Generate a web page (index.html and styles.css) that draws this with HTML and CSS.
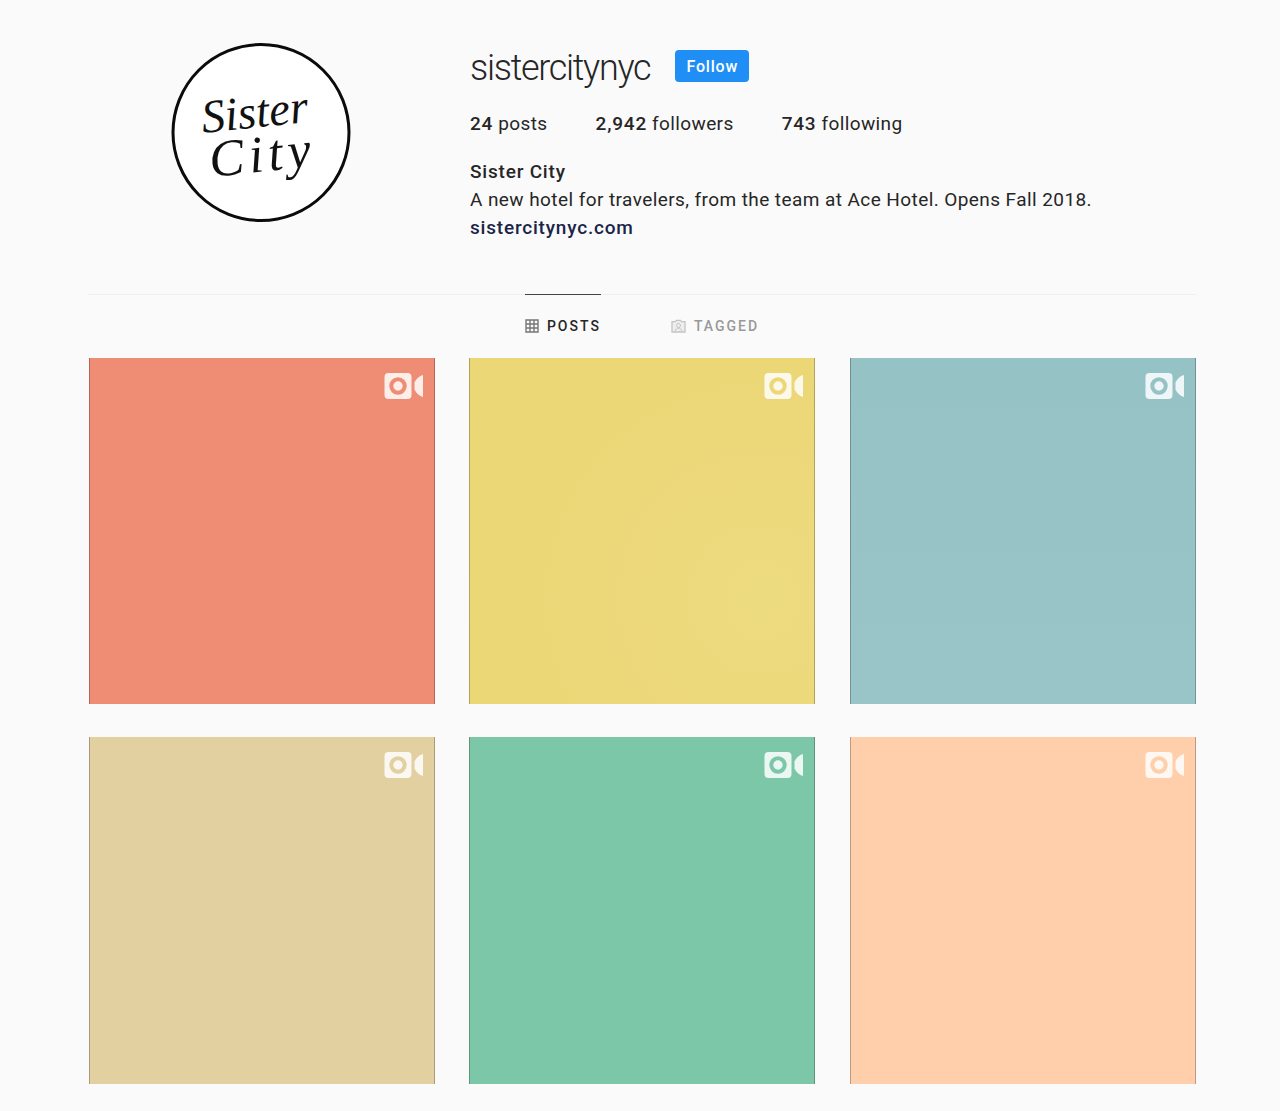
FILE: index.html
```html
<!DOCTYPE html>
<html lang="en">
<head>
    <meta charset="UTF-8">
    <meta name="viewport" content="width=device-width, initial-scale=1.0">
    <title>sistercitynyc</title>
    <link rel="stylesheet" href="styles.css">
</head>
<body>
    <svg class="sprite" width="0" height="0" aria-hidden="true">
        <symbol id="videoIcon" viewBox="0 0 40 28">
            <path fill-rule="evenodd" d="M4.500 1h19a4 4 0 0 1 4 4v18a4 4 0 0 1-4 4h-19a4 4 0 0 1-4-4V5a4 4 0 0 1 4-4zM14 5.300a8.700 8.700 0 1 0 0 17.400 8.700 8.700 0 0 0 0-17.400zM14 9.300a4.700 4.700 0 1 1 0 9.400 4.700 4.700 0 0 1 0-9.400z"/>
            <path d="M39 3v22c-3.600-1-7-4-8.500-7.500v-7C32 7 35.400 4 39 3z"/>
        </symbol>
    </svg>

    <main class="page">
        <!-- Profile header -->
        <header class="profile">
            <div class="avatar-col">
                <svg class="avatar" viewBox="0 0 180 180" role="img" aria-label="Sister City logo">
                    <circle cx="90" cy="89.500" r="88" fill="#fff" stroke="#0b0b0b" stroke-width="3"/>
                    <text class="logo-text" x="32" y="90" transform="rotate(-6 32 90)">Sister</text>
                    <text class="logo-text logo-city" x="40" y="134" transform="rotate(-6 40 134)">City</text>
                </svg>
            </div>
            <section class="info">
                <div class="title-row">
                    <h1>sistercitynyc</h1>
                    <button class="follow">Follow</button>
                </div>
                <ul class="stats">
                    <li><b>24</b> posts</li>
                    <li><b>2,942</b> followers</li>
                    <li><b>743</b> following</li>
                </ul>
                <div class="bio">
                    <h2>Sister City</h2>
                    <p>A new hotel for travelers, from the team at Ace Hotel. Opens Fall 2018.</p>
                    <a href="#">sistercitynyc.com</a>
                </div>
            </section>
        </header>

        <!-- Tabs -->
        <nav class="tabs">
            <a href="#" class="tab active">
                <svg class="tab-icon" viewBox="0 0 14 14">
                    <path fill="none" stroke="#777" stroke-width="1.400" d="M1 1h12v12H1zM5 1v12M9 1v12M1 5h12M1 9h12"/>
                </svg>
                POSTS
            </a>
            <a href="#" class="tab">
                <svg class="tab-icon tagged-icon" viewBox="0 0 15 14">
                    <path fill="#eee" stroke="#c4c4c4" stroke-width="1.300" d="M1 2.700h3.600l.8-1.400h4.200l.8 1.400H14v10.300H1z"/>
                    <circle cx="7.500" cy="6.500" r="2" fill="none" stroke="#c4c4c4"/>
                    <path fill="none" stroke="#c4c4c4" d="M4 12.500c.4-2.200 1.900-3.300 3.500-3.300s3.100 1.100 3.500 3.300"/>
                </svg>
                TAGGED
            </a>
        </nav>

        <!-- Posts -->
        <section class="grid">
            <article class="post coral"><svg class="video"><use href="#videoIcon"/></svg></article>
            <article class="post yellow"><svg class="video"><use href="#videoIcon"/></svg></article>
            <article class="post blue"><svg class="video"><use href="#videoIcon"/></svg></article>
            <article class="post sand"><svg class="video"><use href="#videoIcon"/></svg></article>
            <article class="post green"><svg class="video"><use href="#videoIcon"/></svg></article>
            <article class="post peach"><svg class="video"><use href="#videoIcon"/></svg></article>
        </section>
    </main>
</body>
</html>
```

FILE: styles.css
```css
* {
    box-sizing: border-box;
}
body {
    margin: 0;
    padding: 0;
    background: #fafafa;
    color: #262626;
    font-family: 'Roboto', 'Liberation Sans', sans-serif;
}
.sprite {
    display: block;
}
.page {
    width: 1108px;
    margin-left: 88px;
}
.profile {
    display: flex;
    height: 295px;
    padding-top: 43px;
    border-bottom: 1px solid #efefef;
}
.avatar-col {
    width: 346px;
    margin-right: 36px;
    display: flex;
    justify-content: center;
    flex: none;
}
.avatar {
    display: block;
    width: 180px;
    height: 180px;
}
.logo-text {
    font-family: 'Liberation Serif', serif;
    font-style: italic;
    font-size: 47px;
    fill: #111;
}
.logo-city {
    font-size: 52px;
    letter-spacing: 5px;
}
.title-row {
    display: flex;
    align-items: center;
    height: 46px;
    margin-top: 2px;
}
.title-row h1 {
    margin: 0 25px 0 0;
    font-size: 36px;
    font-weight: 300;
    letter-spacing: -1.300px;
    color: #262626;
}
.follow {
    width: 74px;
    height: 32px;
    padding: 0;
    margin-top: -4px;
    background: #1f8ff5;
    color: #fff;
    border: none;
    border-radius: 4px;
    font-family: inherit;
    font-size: 16px;
    font-weight: 500;
    letter-spacing: 0.800px;
}
.stats {
    list-style: none;
    display: flex;
    gap: 48px;
    margin: 21px 0 0;
    padding: 0;
    font-size: 19px;
    line-height: 24px;
    letter-spacing: 0.380px;
}
.stats b {
    font-weight: 500;
    letter-spacing: 0.800px;
}
.bio {
    margin-top: 22px;
    font-size: 19px;
    line-height: 28px;
    letter-spacing: 0.420px;
}
.bio h2 {
    margin: 0;
    font-size: inherit;
    font-weight: 500;
    letter-spacing: 0.800px;
}
.bio p {
    margin: 0;
}
.bio a {
    color: #1b2547;
    font-weight: 500;
    letter-spacing: 0.800px;
    text-decoration: none;
}
.tabs {
    display: flex;
    justify-content: center;
    gap: 70px;
    height: 64px;
    margin-top: -1px;
}
.tab {
    display: flex;
    align-items: center;
    gap: 8px;
    height: 62px;
    border-top: 1px solid transparent;
    color: #999;
    font-size: 14px;
    font-weight: 500;
    letter-spacing: 2px;
    text-decoration: none;
}
.tab.active {
    border-top-color: #444;
    color: #262626;
}
.tab-icon {
    width: 14px;
    height: 14px;
}
.tagged-icon {
    width: 15px;
}
.grid {
    display: grid;
    grid-template-columns: repeat(3, 346px);
    grid-template-rows: 346px 347px;
    column-gap: 34.400px;
    row-gap: 33px;
    padding-left: 1px;
}
.post {
    position: relative;
    border-left: 1px solid rgba(0, 0, 0, 0.25);
    border-right: 1px solid rgba(0, 0, 0, 0.25);
}
.video {
    position: absolute;
    top: 14px;
    right: 10px;
    width: 40px;
    height: 28px;
    fill: rgba(255, 255, 255, 0.85);
}
.coral { background: #ee8c74; }
.yellow { background: radial-gradient(circle at 85% 70%, #eddb80, #ecd777 60%); }
.blue { background: linear-gradient(180deg, #95c2c5, #9ac5c8); }
.sand { background: #e3d0a1; }
.green { background: #7cc7a7; }
.peach { background: #fecfaa; }
```
